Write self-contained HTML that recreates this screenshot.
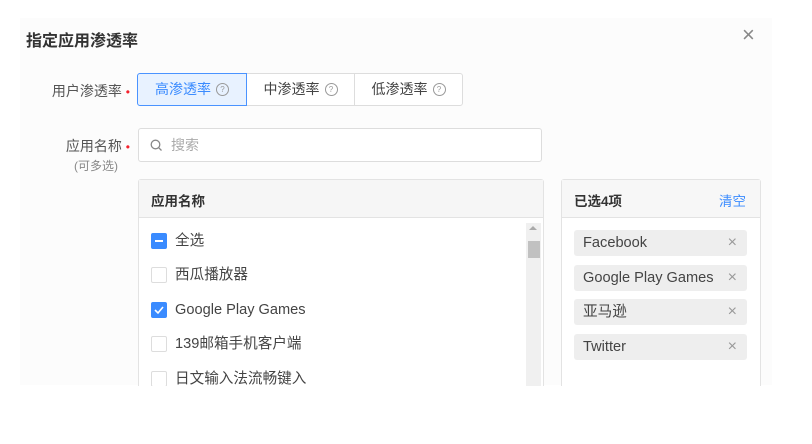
<html><head><style>
body{margin:0;width:812px;height:444px;background:#fff;font-family:"Liberation Sans","Noto Sans CJK SC",sans-serif;position:relative;overflow:hidden;color:#333}
.a{position:absolute}
.bg{left:20px;top:18px;width:752px;height:367px;background:#fcfcfc}
.t{left:26px;top:27px;font-size:16px;font-weight:bold;color:#333}
.lbl{font-size:14px;color:#555;text-align:right}
.req{color:#f5222d;font-size:12px}
.seg{top:73px;height:33px;border:1px solid #ddd;box-sizing:border-box;font-size:14px;line-height:31px;text-align:center;background:#fff;color:#444}
.q{display:inline-block;width:11px;height:11px;border:1px solid #999;border-radius:50%;font-size:8px;line-height:11px;text-align:center;color:#999;vertical-align:middle;margin-left:5px;position:relative;top:-1px}
.row{left:151px;font-size:14.6px;color:#444;height:20px;line-height:20px;padding-left:24px}
.cb{position:absolute;left:0;top:2px;width:14px;height:14px;border:1px solid #ddd;border-radius:2px;background:#fff}
.cb.on{background:#3a8bff;border-color:#3a8bff}
.tag{left:574px;width:173px;height:26px;background:#eee;border-radius:3px;font-size:14.6px;line-height:26px;color:#444;box-sizing:border-box;padding-left:9px}
.tag span{position:absolute;right:10px;color:#999;font-size:16px}
</style></head><body>
<div class="a bg"></div>
<div class="a t">指定应用渗透率</div>
<div class="a" style="left:742px;top:22px;font-size:22px;color:#888">×</div>
<div class="a lbl" style="left:20px;top:81px;width:110px">用户渗透率 <span class="req">•</span></div>
<div class="a seg" style="left:137px;width:110px;background:#e8f2ff;border-color:#4a93ff;color:#3a8bff;z-index:2;border-radius:3px 0 0 3px">高渗透率<span class="q">?</span></div>
<div class="a seg" style="left:246px;width:109px">中渗透率<span class="q">?</span></div>
<div class="a seg" style="left:354px;width:109px;border-radius:0 3px 3px 0">低渗透率<span class="q">?</span></div>
<div class="a lbl" style="left:20px;top:136px;width:110px">应用名称 <span class="req">•</span></div>
<div class="a lbl" style="left:30px;top:157px;width:88px;font-size:12px;color:#888">(可多选)</div>
<div class="a" style="left:138px;top:128px;width:404px;height:34px;border:1px solid #ddd;border-radius:3px;background:#fff;box-sizing:border-box;font-size:14px;color:#aaa;line-height:32px;padding-left:32px">搜索
<svg class="a" style="left:11px;top:10px" width="13" height="13" viewBox="0 0 13 13"><circle cx="5.5" cy="5.5" r="4.3" fill="none" stroke="#888" stroke-width="1.3"/><path d="M8.7 8.7L11.5 11.5" stroke="#888" stroke-width="1.3"/></svg></div>
<div class="a" style="left:138px;top:179px;width:406px;height:220px;border:1px solid #e3e3e3;background:#fff;box-sizing:border-box;border-radius:3px 3px 0 0"></div>
<div class="a" style="left:139px;top:180px;width:404px;height:37px;background:#f6f6f6;border-bottom:1px solid #e3e3e3"></div>
<div class="a" style="left:151px;top:190px;font-size:13.5px;font-weight:bold;color:#333">应用名称</div>
<div class="a" style="left:526px;top:223px;width:15px;height:170px;background:#f0f0f0"></div>
<div class="a" style="left:528px;top:241px;width:12px;height:17px;background:#c1c1c1"></div>
<div class="a" style="left:529px;top:226px;width:0;height:0;border:4px solid transparent;border-bottom-color:#aaa;border-top:0"></div>
<div class="a row" style="top:231px"><span class="cb on"><span class="a" style="left:3px;top:6px;width:8px;height:2px;background:#fff"></span></span>全选</div>
<div class="a row" style="top:265px"><span class="cb"></span>西瓜播放器</div>
<div class="a row" style="top:300px"><span class="cb on"><svg class="a" style="left:2px;top:2px" width="10" height="10" viewBox="0 0 10 10"><path d="M1 5L4 8L9 2" fill="none" stroke="#fff" stroke-width="1.6"/></svg></span>Google Play Games</div>
<div class="a row" style="top:334px"><span class="cb"></span>139邮箱手机客户端</div>
<div class="a row" style="top:369px"><span class="cb"></span>日文输入法流畅键入</div>
<div class="a" style="left:561px;top:179px;width:200px;height:220px;border:1px solid #e3e3e3;background:#fff;box-sizing:border-box;border-radius:3px 3px 0 0"></div>
<div class="a" style="left:562px;top:180px;width:198px;height:37px;background:#f7f7f7;border-bottom:1px solid #e3e3e3"></div>
<div class="a" style="left:574px;top:190px;font-size:13.5px;font-weight:bold;color:#333">已选4项</div>
<div class="a" style="left:719px;top:190px;font-size:13.5px;color:#3a8bff">清空</div>
<div class="a tag" style="top:230px">Facebook<span>×</span></div>
<div class="a tag" style="top:265px">Google Play Games<span>×</span></div>
<div class="a tag" style="top:299px">亚马逊<span>×</span></div>
<div class="a tag" style="top:334px">Twitter<span>×</span></div>
<div class="a" style="left:0;top:386px;width:812px;height:58px;background:#fff"></div>
</body></html>
